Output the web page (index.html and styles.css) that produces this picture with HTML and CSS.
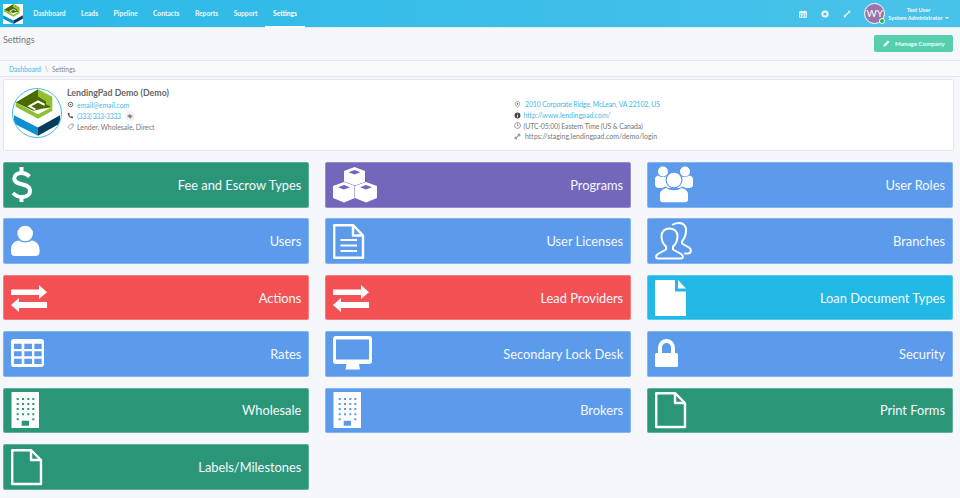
FILE: index.html
```html
<!DOCTYPE html>
<html lang="en">
<head>
<meta charset="utf-8">
<title>Settings</title>
<link rel="stylesheet" href="styles.css">
</head>
<body>
<svg class="defs" width="0" height="0" aria-hidden="true">
  <defs>
    <symbol id="logo" viewBox="12 7 138 140">
      <polygon fill="#4a6b00" points="17,47 84,7 84,28 122,48 122,62 95,66 70,72"/>
      <polygon fill="#8fc031" points="84,7 127,30 127,62 108,52 108,44 84,28"/>
      <polyline fill="none" stroke="#fff" stroke-width="6" points="104,54 84,44 58,58 76,68"/>
      <polygon fill="#8fc031" points="17,47 50,64 84,82 127,60 127,72 84,96 17,60"/>
      <polygon fill="#0d8fd0" points="12,85 84,122 84,147 12,110"/>
      <polygon fill="#033d5c" points="84,122 150,85 150,110 84,147"/>
    </symbol>
    <symbol id="i-dollar" viewBox="0 0 40 40">
      <path fill="none" stroke="#fff" stroke-width="4" d="M18.500 11.500C16 9 13.500 8 10.500 8 6 8 3.300 10.200 3.300 13.500 3.300 21.500 19 17 19 26 19 29.800 15.500 32 11 32 7.500 32 4.300 30.500 2 28M10.500 2V8M10.500 32V37"/>
    </symbol>
    <symbol id="i-user" viewBox="0 0 40 40">
      <circle cx="14.200" cy="12.500" r="7.800" fill="#fff"/>
      <path fill="#fff" d="M3.500 35C1.500 35 0 33.500 0 31.500V28C0 23 4 20 8 19.500 11 22 17.500 22 20.500 19.500 24.500 20 28.500 23 28.500 28V31.500C28.500 33.500 27 35 25 35Z"/>
    </symbol>
    <symbol id="i-cubes" viewBox="0 0 46 40">
      <path fill="#fff" fill-rule="evenodd" d="M21.500 2L32 6V18L21.500 22 11 18V6ZM21.500 5L15.500 7.300 21.500 9.600 27.500 7.300Z"/>
      <path fill="#fff" fill-rule="evenodd" class="cube" d="M11 17L22 21V33L11 37.500 0 33V21ZM11 20L5 22.300 11 24.600 17 22.300Z"/>
      <path fill="#fff" fill-rule="evenodd" class="cube" d="M33 17L44 21V33L33 37.500 22 33V21ZM33 20L27 22.300 33 24.600 39 22.300Z"/>
    </symbol>
    <symbol id="i-doc-lines" viewBox="0 0 40 40">
      <path fill="none" stroke="#fff" stroke-width="2.400" stroke-linejoin="round" d="M1.200 4.200H20L30 14.500V36.800H1.200ZM20 4.200V14.500H30"/>
      <path fill="none" stroke="#fff" stroke-width="2" d="M7.500 19H24M7.500 24.500H24M7.500 30H24"/>
    </symbol>
    <symbol id="i-users" viewBox="0 0 40 40">
      <circle cx="8" cy="6.500" r="5" fill="#fff"/>
      <circle cx="30" cy="6.500" r="5" fill="#fff"/>
      <path fill="#fff" d="M0 14C0 12 1.500 11 3 10.500 6 12.500 10 12.500 13 10.500L24 10.500C27 12.500 31 12.500 34 10.500 36.500 11 38 12 38 14V20C38 22 36 23 34 23H4C2 23 0 22 0 20Z"/>
      <circle cx="19" cy="15" r="8.500" class="halo"/>
      <path class="halo" d="M4 37V29C4 25 8 22 11 21.500 15 25 23 25 27 21.500 30 22 34 25 34 29V37Z"/>
      <circle cx="19" cy="15" r="7.300" fill="#fff"/>
      <path fill="#fff" d="M8 37.300C6 37.300 5 36 5 34.500V29C5 26 8.500 23.500 11.500 23 15 26 23 26 26.500 23 29.500 23.500 33 26 33 29V34.500C33 36 32 37.300 30 37.300Z"/>
    </symbol>
    <symbol id="i-users-o" viewBox="0 0 40 40">
      <path fill="none" stroke="#fff" stroke-width="2" stroke-linejoin="round" d="M3 37.500C.5 37.500.5 34.500 3 33L11 28.500V25.500C8 23 6.500 19 6.500 15 6.500 10.500 10 7.500 14.500 7.500 19 7.500 22.500 10.500 22.500 15 22.500 19 21 23 18 25.500V28.500L26 33C28.500 34.500 28.500 37.500 26 37.500Z"/>
      <path fill="none" stroke="#fff" stroke-width="2" stroke-linecap="round" d="M18 3.500C20 2.300 22 2 24 2 28.500 2 31 5 31 9.500 31 14 29 18 27 20.500V22.500L34 26.500C37 28.500 36 32.500 33 32.500H30"/>
    </symbol>
    <symbol id="i-exchange" viewBox="0 0 40 40">
      <path fill="#fff" d="M0 11.500H28V7L36 14.200 28 21V17H0ZM36 24V30H8V34L0 27 8 20V24Z"/>
    </symbol>
    <symbol id="i-file" viewBox="0 0 40 40">
      <path fill="#fff" d="M1 2H20V13.500H31V37C31 37.600 30.600 38 30 38H1C.4 38 0 37.600 0 37V3C0 2.400.4 2 1 2ZM23 2L31 10.500H23Z"/>
    </symbol>
    <symbol id="i-file-o" viewBox="0 0 40 40">
      <path fill="none" stroke="#fff" stroke-width="2.400" stroke-linejoin="round" d="M1.200 3.200H20L30 13V37H1.200ZM20 3.200V13H30"/>
    </symbol>
    <symbol id="i-table" viewBox="0 0 40 40">
      <path fill="#fff" fill-rule="evenodd" d="M3 5H30C32 5 33 6 33 8V30C33 32 32 33 30 33H3C1 33 0 32 0 30V8C0 6 1 5 3 5ZM3 9.700V15H10.700V9.700ZM13.300 9.700V15H21V9.700ZM23.300 9.700V15H30.700V9.700ZM3 17.300V22.300H10.700V17.300ZM13.300 17.300V22.300H21V17.300ZM23.300 17.300V22.300H30.700V17.300ZM3 24.700V30H10.700V24.700ZM13.300 24.700V30H21V24.700ZM23.300 24.700V30H30.700V24.700Z"/>
    </symbol>
    <symbol id="i-monitor" viewBox="0 0 40 40">
      <path fill="#fff" fill-rule="evenodd" d="M3 2H36C38 2 39 3 39 5V27C39 29 38 30 36 30H26L27 35.500H12.500L13.500 30H3C1 30 0 29 0 27V5C0 3 1 2 3 2ZM3 5.500V25.500H36V5.500Z"/>
    </symbol>
    <symbol id="i-lock" viewBox="0 0 40 40">
      <path fill="none" stroke="#fff" stroke-width="4" d="M5 20V13.500A6.500 6.500 0 0 1 18 13.500V20"/>
      <rect x="0" y="19" width="23" height="14" rx="1.500" fill="#fff"/>
    </symbol>
    <symbol id="i-building" viewBox="0 0 40 40">
      <path fill="#fff" fill-rule="evenodd" d="M.5 2H28V38H.5ZM10.700 30.700V35.700H18V30.700Z"/>
      <path class="bdots" stroke-width="2" stroke-dasharray="2 3.050" d="M6.700 8V31M12 8V26M17.300 8V26M22.300 8V31"/>
    </symbol>
  </defs>
</svg>

<header class="navbar">
  <a class="brand" href="#"><svg class="brand-logo"><use href="#logo"/></svg></a>
  <nav class="nav">
    <a href="#">Dashboard</a>
    <a href="#">Leads</a>
    <a href="#">Pipeline</a>
    <a href="#">Contacts</a>
    <a href="#">Reports</a>
    <a href="#">Support</a>
    <a class="active" href="#">Settings</a>
  </nav>
  <div class="nav-right">
    <svg class="nav-icon" viewBox="0 0 10 10"><path fill="#fff" fill-rule="evenodd" d="M1 1.500H2.500V.5H3.500V1.500H6.500V.5H7.500V1.500H9C9.500 1.500 9.800 1.800 9.800 2.300V9C9.800 9.500 9.500 9.800 9 9.800H1C.5 9.800.2 9.500.2 9V2.300C.2 1.800.5 1.500 1 1.500ZM1.200 4V5.500H3V4ZM4 4V5.500H6V4ZM7 4V5.500H8.800V4ZM1.200 6.500V8.500H3V6.500ZM4 6.500V8.500H6V6.500ZM7 6.500V8.500H8.800V6.500Z"/></svg>
    <svg class="nav-icon" viewBox="0 0 10 10"><path fill="#fff" fill-rule="evenodd" d="M5 .5A4.500 4.500 0 1 1 5 9.500 4.500 4.500 0 0 1 5 .5ZM5 3A2 2 0 1 0 5 7 2 2 0 0 0 5 3Z"/><path stroke="#4ac3ea" stroke-width=".5" d="M1.800 1.800L3.500 3.500M8.200 1.800L6.500 3.500M1.800 8.200L3.500 6.500M8.200 8.200L6.500 6.500"/></svg>
    <svg class="nav-icon last" viewBox="0 0 10 10"><path fill="#fff" d="M6 1H9V4L8 3 3 8 4 9H1V6L2 7 7 2Z"/></svg>
    <div class="avatar">WY<span class="online"></span></div>
    <div class="usr">
      <div>Test User</div>
      <div>System Administrator <span class="caret"></span></div>
    </div>
  </div>
</header>

<div class="page-head">
  <h1>Settings</h1>
  <a class="btn" href="#"><svg class="btn-icon" viewBox="0 0 10 10"><path fill="#fff" d="M7 .8L9.200 3 3.300 8.900.6 9.400 1.100 6.700Z"/></svg>Manage Company</a>
</div>

<div class="crumbs"><a href="#">Dashboard</a><span class="sep">\</span><span>Settings</span></div>

<section class="card">
  <div class="card-logo"><svg><use href="#logo"/></svg></div>
  <div class="info">
    <h2>LendingPad Demo (Demo)</h2>
    <div class="row">
      <svg class="ri" viewBox="0 0 10 10"><circle cx="5" cy="5" r="3.200" fill="none" stroke="#666" stroke-width="1.400"/><circle cx="5" cy="5" r="1.200" fill="#666"/></svg>
      <a href="#">email@email.com</a>
    </div>
    <div class="row">
      <svg class="ri" viewBox="0 0 10 10"><path fill="#555" d="M1 1.500L3 1 4.200 3.200 3.200 4.200C3.700 5.400 4.600 6.300 5.800 6.800L6.800 5.800 9 7 8.500 9C4.500 9.300.7 5.500 1 1.500Z"/></svg>
      <a class="tight" href="#">(333) 333-3333</a>
      <span class="chip"><svg viewBox="0 0 10 10"><path stroke="#444" stroke-width="1.200" d="M2 3.500V7M4 2V8M6 3V9M8 4V7"/></svg></span>
    </div>
    <div class="row plain">
      <svg class="ri tag" viewBox="0 0 10 10"><path fill="none" stroke="#666" stroke-width=".8" d="M5.500 1.500H9V5L4.500 9.200 1 5.500Z"/><circle cx="7.300" cy="3.200" r=".6" fill="#666"/></svg>
      <span>Lender, Wholesale, Direct</span>
    </div>
  </div>
  <div class="info right">
    <div class="row">
      <svg class="ri" viewBox="0 0 10 10"><path fill="none" stroke="#666" stroke-width=".8" d="M5 .8C7 .8 8.200 2.200 8.200 4 8.200 6 6 8 5 9.300 4 8 1.800 6 1.800 4 1.800 2.200 3 .8 5 .8Z"/><circle cx="5" cy="4" r="1.200" fill="#666"/></svg>
      <a class="slight" href="#">2010 Corporate Ridge, McLean, VA 22102, US</a>
    </div>
    <div class="row near">
      <svg class="ri" viewBox="0 0 10 10"><path fill="#444" fill-rule="evenodd" d="M5 .8A4.200 4.200 0 1 1 5 9.200 4.200 4.200 0 0 1 5 .8ZM4.400 2V3.300H5.600V2ZM4.400 4.200V8H5.600V4.200Z"/></svg>
      <a href="#">http://www.lendingpad.com/</a>
    </div>
    <div class="row plain near">
      <svg class="ri" viewBox="0 0 10 10"><circle cx="5" cy="5" r="4.200" fill="none" stroke="#555" stroke-width=".8"/><path fill="none" stroke="#555" stroke-width=".8" d="M5 2.200V5.400H7.200"/></svg>
      <span class="slight">(UTC-05:00) Eastern Time (US &amp; Canada)</span>
    </div>
    <div class="row plain">
      <svg class="ri" viewBox="0 0 10 10"><path fill="none" stroke="#666" stroke-width="1" d="M6 1.500H8.500V4H6ZM1.500 6H4V8.500H1.500ZM4 6L6 4"/></svg>
      <span class="loose">https://staging.lendingpad.com/demo/login</span>
    </div>
  </div>
</section>

<main class="tiles">
  <a class="tile green" href="#"><svg class="ti"><use href="#i-dollar"/></svg><span>Fee and Escrow Types</span></a>
  <a class="tile purple" href="#"><svg class="ti wide"><use href="#i-cubes"/></svg><span>Programs</span></a>
  <a class="tile blue" href="#"><svg class="ti"><use href="#i-users"/></svg><span>User Roles</span></a>
  <a class="tile blue" href="#"><svg class="ti"><use href="#i-user"/></svg><span>Users</span></a>
  <a class="tile blue" href="#"><svg class="ti"><use href="#i-doc-lines"/></svg><span>User Licenses</span></a>
  <a class="tile blue" href="#"><svg class="ti"><use href="#i-users-o"/></svg><span>Branches</span></a>
  <a class="tile red" href="#"><svg class="ti"><use href="#i-exchange"/></svg><span>Actions</span></a>
  <a class="tile red" href="#"><svg class="ti"><use href="#i-exchange"/></svg><span>Lead Providers</span></a>
  <a class="tile cyan" href="#"><svg class="ti"><use href="#i-file"/></svg><span>Loan Document Types</span></a>
  <a class="tile blue" href="#"><svg class="ti"><use href="#i-table"/></svg><span>Rates</span></a>
  <a class="tile blue" href="#"><svg class="ti"><use href="#i-monitor"/></svg><span>Secondary Lock Desk</span></a>
  <a class="tile blue" href="#"><svg class="ti"><use href="#i-lock"/></svg><span>Security</span></a>
  <a class="tile green" href="#"><svg class="ti"><use href="#i-building"/></svg><span>Wholesale</span></a>
  <a class="tile blue" href="#"><svg class="ti"><use href="#i-building"/></svg><span>Brokers</span></a>
  <a class="tile green" href="#"><svg class="ti"><use href="#i-file-o"/></svg><span>Print Forms</span></a>
  <a class="tile green" href="#"><svg class="ti"><use href="#i-file-o"/></svg><span>Labels/Milestones</span></a>
</main>
</body>
</html>
```
FILE: styles.css
```css
* { box-sizing: border-box; }
html, body { margin: 0; padding: 0; }
body {
  width: 960px;
  height: 498px;
  overflow: hidden;
  background: #f5f7fb;
  font-family: "Lato", "Noto Sans", sans-serif;
  color: #666;
}
a { text-decoration: none; color: inherit; }
.defs { display: block; height: 0; }

.navbar {
  height: 28px;
  display: flex;
  align-items: stretch;
  background: linear-gradient(90deg, #2bb9e8, #4ac3ea);
  border-bottom: 1px solid #e3e8ee;
}
.brand { padding: 4px 0 0 3px; width: 25.500px; }
.brand-logo { display: block; width: 20px; height: 20px; background: #fff; }
.nav { display: flex; }
.nav a {
  padding: 0 7.750px;
  line-height: 27px;
  font-size: 6.700px;
  font-weight: 700;
  color: #eafaff;
  border-bottom: 2px solid transparent;
  height: 28px;
}
.nav a.active { border-bottom-color: #fff; color: #fff; }
.nav-right {
  margin-left: auto;
  display: flex;
  align-items: center;
  padding-right: 11px;
}
.nav-icon { width: 8px; height: 8px; margin-right: 14px; }
.nav-icon.last { margin-right: 13px; }
.avatar {
  position: relative;
  width: 21px;
  height: 21px;
  border-radius: 50%;
  background: #9a74ac;
  border: 1px solid #fff;
  color: #fff;
  font-size: 10px;
  line-height: 19px;
  text-align: center;
}
.online {
  position: absolute;
  right: -1px;
  bottom: -1px;
  width: 6px;
  height: 6px;
  border-radius: 50%;
  background: #1bb934;
  border: 1px solid #fff;
}
.usr {
  margin-left: 3px;
  font-size: 5.700px;
  font-weight: 700;
  line-height: 8px;
  color: #f0fbff;
  text-align: center;
}
.caret {
  display: inline-block;
  width: 0;
  height: 0;
  margin-left: 1px;
  vertical-align: middle;
  border: 2px solid transparent;
  border-top-color: #fff;
  border-bottom: 0;
}

.page-head {
  height: 33px;
  padding: 6px 7px 0 3px;
  display: flex;
  justify-content: space-between;
  align-items: flex-start;
  border-bottom: 1px solid #e3e8ee;
}
.page-head h1 {
  margin: 0;
  font-size: 9px;
  font-weight: 400;
  line-height: 11px;
  color: #777;
}
.btn {
  width: 79px;
  height: 17px;
  margin-top: 1px;
  background: #57cfae;
  border-radius: 2px;
  color: #eafff8;
  font-size: 6.200px;
  font-weight: 700;
  line-height: 17px;
  display: flex;
  align-items: center;
  padding-left: 9px;
  gap: 5px;
}
.btn-icon { width: 7px; height: 7px; flex: none; }

.crumbs {
  height: 16px;
  padding-left: 9px;
  display: flex;
  align-items: center;
  gap: 4px;
  font-size: 6.700px;
  color: #888;
  background: #f8f9fa;
  border-bottom: 1px solid #e3e8ee;
}
.crumbs a { color: #43b9e6; }
.sep { color: #aaa; }

.card {
  margin: 2px 6px 0 3px;
  height: 72px;
  background: #fff;
  border: 1px solid #e3e8ee;
  border-radius: 2px;
  display: flex;
}
.card-logo {
  width: 50px;
  height: 50px;
  margin: 8px 0 0 8px;
  border: 1px solid #44bce8;
  border-radius: 50%;
  flex: none;
  background: #fff;
  overflow: hidden;
}
.card-logo svg { display: block; width: 46px; height: 47px; margin: 0 0 0 1px; }
.info { margin: 7px 0 0 5px; flex: 0 0 447px; font-size: 6.900px; color: #777; }
.info h2 {
  margin: 0;
  font-size: 8.800px;
  line-height: 12px;
  font-weight: 700;
  color: #666;
}
.info .row { display: flex; align-items: center; height: 11px; gap: 3px; }
.info .row a { color: #45b9e6; }
.tight { letter-spacing: -.3px; }
.slight { letter-spacing: -.12px; }
.loose { letter-spacing: .05px; }
.ri { width: 7px; height: 7px; flex: none; }
.chip {
  width: 10px;
  height: 10px;
  margin-left: 1px;
  border-radius: 50%;
  background: #f2f2f2;
  display: inline-flex;
  align-items: center;
  justify-content: center;
}
.chip svg { width: 6px; height: 6px; }
.info.right { margin: 19px 0 0 0; flex: 1 1 auto; }
.right .row { height: 10.700px; gap: 4px; }
.info.right .near { gap: 2.500px; }

.tiles {
  margin-top: 11px;
  padding: 0 7px 0 3px;
  display: grid;
  grid-template-columns: repeat(3, 1fr);
  grid-auto-rows: 45.600px;
  column-gap: 15.500px;
  row-gap: 10.800px;
}
.tile {
  --tile: #5c9bec;
  display: flex;
  align-items: center;
  justify-content: space-between;
  padding: 0 7px;
  background: var(--tile);
  border-radius: 2px;
  color: #f4f8ff;
  font-size: 12.850px;
  border: 1px solid rgba(255, 255, 255, .25);
}
.ti { width: 40px; height: 40px; flex: none; }
.ti.wide { width: 46px; height: 40px; }
.green { --tile: #2b9677; }
.purple { --tile: #7367bb; }
.blue { --tile: #5c9bec; }
.red { --tile: #f35153; }
.cyan { --tile: #22b8e6; }
.halo { fill: var(--tile); }
.cube { stroke: var(--tile); stroke-width: 1; paint-order: stroke; }
.bdots { fill: none; stroke: var(--tile); }
```
